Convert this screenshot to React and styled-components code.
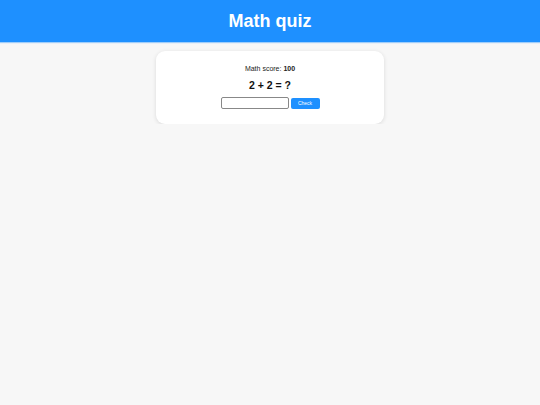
import React, { useState } from 'react';
import styled, { createGlobalStyle } from 'styled-components';

const GlobalStyle = createGlobalStyle`
  body {
    margin: 0;
    background-color: #f7f7f7;
    font-family: "Liberation Sans", Arial, sans-serif;
  }
`;

const Header = styled.header`
  background-color: #1e90ff;
  height: 42px;
  display: flex;
  align-items: center;
  justify-content: center;
  box-shadow: 0 1px 1px rgba(30, 144, 255, 0.4);
`;

const Title = styled.h1`
  margin: 0;
  color: #ffffff;
  font-size: 18px;
  font-weight: bold;
`;

const Main = styled.main`
  display: flex;
  justify-content: center;
  padding-top: 9px;
`;

const Card = styled.div`
  width: 228px;
  box-sizing: border-box;
  background-color: #ffffff;
  border-radius: 9px;
  box-shadow: 0 1px 4px rgba(0, 0, 0, 0.12);
  padding: 14px 10px 15px;
  display: flex;
  flex-direction: column;
  align-items: center;
`;

const Score = styled.p`
  margin: 0;
  font-size: 7px;
  color: #222;
`;

const Question = styled.p`
  margin: 7px 0 0;
  font-size: 10.5px;
  font-weight: bold;
  color: #111;
`;

const Form = styled.form`
  display: flex;
  align-items: center;
  gap: 2px;
  margin-top: 6px;
`;

const Input = styled.input`
  width: 68px;
  height: 12px;
  box-sizing: border-box;
  padding: 0 2px;
  border: 1px solid #888;
  border-radius: 2px;
  font-size: 7px;
`;

const CheckButton = styled.button`
  height: 11px;
  width: 29px;
  padding: 0;
  border: none;
  border-radius: 2px;
  background-color: #1e90ff;
  color: #ffffff;
  font-family: "Liberation Sans", Arial, sans-serif;
  font-size: 5px;
  cursor: pointer;
`;

function App() {
  const [answer, setAnswer] = useState('');
  const [score, setScore] = useState(100);

  const handleSubmit = (e) => {
    e.preventDefault();
    if (Number(answer) === 4) setScore(score + 1);
    setAnswer('');
  };

  return (
    <>
      <GlobalStyle />
      <Header>
        <Title>Math quiz</Title>
      </Header>
      <Main>
        <Card>
          <Score>
            Math score: <b>{score}</b>
          </Score>
          <Question>2 + 2 = ?</Question>
          <Form onSubmit={handleSubmit}>
            <Input value={answer} onChange={(e) => setAnswer(e.target.value)} />
            <CheckButton type="submit">Check</CheckButton>
          </Form>
        </Card>
      </Main>
    </>
  );
}

export default App;
